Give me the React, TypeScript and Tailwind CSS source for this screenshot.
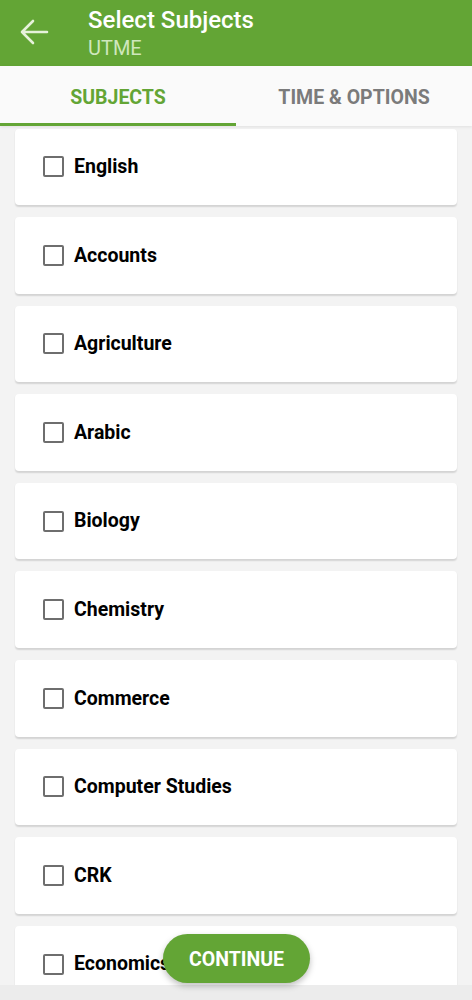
import { useState } from "react";

const subjects = [
  "English",
  "Accounts",
  "Agriculture",
  "Arabic",
  "Biology",
  "Chemistry",
  "Commerce",
  "Computer Studies",
  "CRK",
  "Economics",
];

export default function App() {
  const [checked, setChecked] = useState<string[]>([]);

  const toggle = (s: string) =>
    setChecked((c) => (c.includes(s) ? c.filter((x) => x !== s) : [...c, s]));

  return (
    <div
      className="relative h-[1000px] w-[472px] overflow-hidden bg-[#f3f3f3] flex flex-col"
      style={{ fontFamily: "Roboto, 'Liberation Sans', sans-serif" }}
    >
      {/* Header */}
      <header className="h-[66px] shrink-0 bg-[#63a535] flex items-center">
        <button className="w-[88px] h-full flex items-start pt-[18px] pl-[19px]">
          <svg width="30" height="28" viewBox="0 0 30 28" fill="none">
            <path
              d="M28 14H3M14 3L3 14l11 11"
              stroke="#e6f2da"
              strokeWidth="2.6"
              strokeLinecap="round"
              strokeLinejoin="round"
            />
          </svg>
        </button>
        <div className="flex flex-col -mt-[1px]">
          <span className="text-white text-[24px] font-medium leading-[28px]">
            Select Subjects
          </span>
          <span className="text-[#cfe7bd] text-[20px] leading-[24px] mt-[2px]">UTME</span>
        </div>
      </header>

      {/* Tabs */}
      <div className="h-[60px] shrink-0 bg-[#fafafa] flex relative z-10 shadow-[0_1px_3px_rgba(0,0,0,0.08)]">
        <div className="w-1/2 flex items-center justify-center border-b-[3px] border-[#63a535] pt-[6px]">
          <span className="text-[#63a535] text-[19.5px] font-bold">SUBJECTS</span>
        </div>
        <div className="w-1/2 flex items-center justify-center pt-[3px]">
          <span className="text-[#7b7b7b] text-[19.5px] font-bold">
            TIME &amp; OPTIONS
          </span>
        </div>
      </div>

      {/* List */}
      <div className="flex-1 overflow-hidden px-[15px] pt-[2.5px] flex flex-col gap-[12px]">
        {subjects.map((s) => (
          <label
            key={s}
            onClick={() => toggle(s)}
            className="h-[76.6px] shrink-0 bg-white rounded-[4px] shadow-[0_1.5px_1.5px_rgba(0,0,0,0.13)] flex items-center pl-[28px] pr-4 cursor-pointer"
          >
            <span
              className={
                checked.includes(s)
                  ? "w-[21px] h-[21px] rounded-[2px] bg-[#63a535] border-2 border-[#63a535]"
                  : "w-[21px] h-[21px] rounded-[2px] border-2 border-[#6e6e6e]"
              }
            />
            <span className="ml-[10px] text-[19.5px] font-bold text-black leading-none">
              {s}
            </span>
          </label>
        ))}
      </div>

      <div className="h-[15px] shrink-0 bg-[#ececec]" />

      {/* Continue */}
      <button className="absolute left-[163px] top-[934px] w-[147px] h-[49px] pt-[3px] rounded-full bg-[#63a535] text-white text-[19.5px] font-bold shadow-[0_3px_6px_rgba(0,0,0,0.25)]">
        CONTINUE
      </button>
    </div>
  );
}
